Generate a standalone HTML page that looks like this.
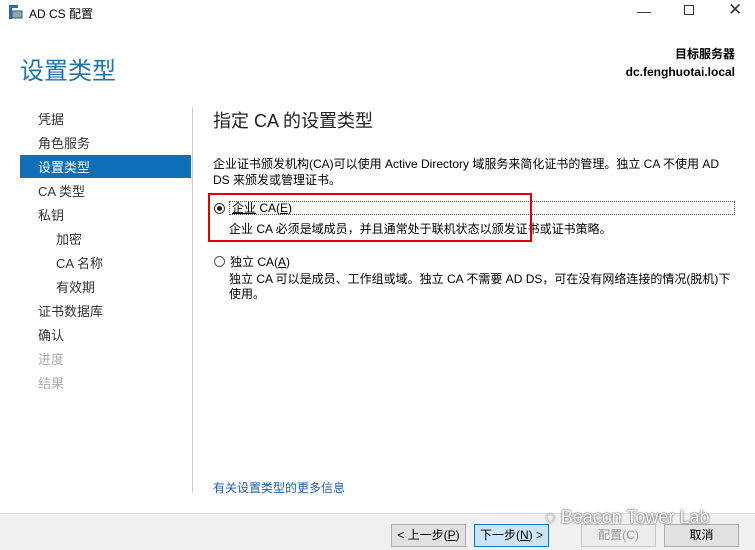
<!DOCTYPE html>
<html><head><meta charset="utf-8"><style>
*{margin:0;padding:0;box-sizing:border-box}
body{width:755px;height:550px;background:#fff;font-family:"Liberation Sans","Noto Sans CJK SC",sans-serif;position:relative;overflow:hidden;color:#000}
.a{position:absolute;white-space:nowrap}
.nav{position:absolute;left:38px;font-size:13px;color:#333;line-height:16px}
.btn{position:absolute;top:524px;height:23px;border:1px solid #adadad;background:#e1e1e1;font-size:12px;text-align:center;line-height:21px}
.t{font-size:12px;color:#000;line-height:16px}
</style></head><body>
<svg class="a" style="left:8px;top:4px" width="16" height="16"><rect x="1" y="1" width="3" height="14" fill="#2b6cb0"/><rect x="4" y="7" width="10" height="7" fill="#8aa" stroke="#456" stroke-width="1"/><rect x="4" y="1" width="6" height="3" fill="#2b6cb0"/></svg>
<div class="a" style="left:29px;top:5px;font-size:12px">AD CS 配置</div>
<div class="a" style="left:637px;top:3px;font-size:14px;color:#333">—</div>
<div class="a" style="left:684px;top:5px;width:10px;height:10px;border:1px solid #333"></div>
<div class="a" style="left:728px;top:0px;font-size:17px;color:#333">✕</div>
<div class="a" style="left:20px;top:51px;font-size:24px;color:#1e73a8">设置类型</div>
<div class="a" style="right:20px;top:45px;font-size:12px;font-weight:bold;text-align:right;line-height:18px">目标服务器<br>dc.fenghuotai.local</div>
<div class="a" style="left:20px;top:155px;width:171px;height:23px;background:#0f6fb8"></div>
<div class="nav" style="top:112px">凭据</div>
<div class="nav" style="top:136px">角色服务</div>
<div class="nav" style="top:160px;color:#fff">设置类型</div>
<div class="nav" style="top:184px">CA 类型</div>
<div class="nav" style="top:208px">私钥</div>
<div class="nav" style="top:232px;left:56px">加密</div>
<div class="nav" style="top:256px;left:56px">CA 名称</div>
<div class="nav" style="top:280px;left:56px">有效期</div>
<div class="nav" style="top:304px">证书数据库</div>
<div class="nav" style="top:328px">确认</div>
<div class="nav" style="top:352px;color:#aaa">进度</div>
<div class="nav" style="top:376px;color:#aaa">结果</div>
<div class="a" style="left:192px;top:107px;width:1px;height:386px;background:#ccc"></div>
<div class="a" style="left:213px;top:107px;font-size:18px;color:#222">指定 CA 的设置类型</div>
<div class="a t" style="left:213px;top:156px">企业证书颁发机构(CA)可以使用 Active Directory 域服务来简化证书的管理。独立 CA 不使用 AD<br>DS 来颁发或管理证书。</div>
<div class="a" style="left:214px;top:203px;width:11px;height:11px;border:1px solid #333;border-radius:50%"></div>
<div class="a" style="left:217px;top:206px;width:5px;height:5px;background:#222;border-radius:50%"></div>
<div class="a" style="left:229px;top:201px;width:506px;height:14px;border:1px dotted #555"></div>
<div class="a t" style="left:232px;top:200px"><u>企业</u> CA(<u>E</u>)</div>
<div class="a t" style="left:229px;top:221px">企业 CA 必须是域成员，并且通常处于联机状态以颁发证书或证书策略。</div>
<div class="a" style="left:208px;top:193px;width:324px;height:49px;border:2px solid #e00000"></div>
<div class="a" style="left:214px;top:256px;width:11px;height:11px;border:1px solid #555;border-radius:50%"></div>
<div class="a t" style="left:230px;top:254px">独立 CA(<u>A</u>)</div>
<div class="a t" style="left:229px;top:272px;line-height:15px">独立 CA 可以是成员、工作组或域。独立 CA 不需要 AD DS，可在没有网络连接的情况(脱机)下<br>使用。</div>
<div class="a" style="left:213px;top:479px;font-size:12px;color:#1a5fb4">有关设置类型的更多信息</div>
<div class="a" style="left:0;top:513px;width:755px;height:37px;background:#f0f0f0;border-top:1px solid #dcdcdc"></div>
<div class="btn" style="left:391px;width:75px">&lt; 上一步(<u>P</u>)</div>
<div class="btn" style="left:474px;width:75px;background:#cce4f7;border-color:#0078d7">下一步(<u>N</u>) &gt;</div>
<div class="btn" style="left:581px;width:75px;background:#ececec;border-color:#c8c8c8;color:#999">配置(C)</div>
<div class="btn" style="left:664px;width:75px">取消</div>
<div class="a" style="left:545px;top:507px;font-size:18px;color:#fff;text-shadow:0 0 2px #555,0 0 1px #555">◌ Beacon Tower Lab</div>
</body></html>
